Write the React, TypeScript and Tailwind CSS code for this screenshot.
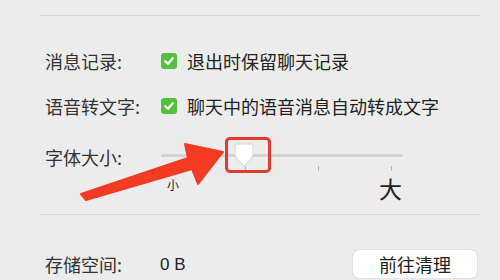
import React from 'react'

const font = { fontFamily: '"Noto Sans CJK SC", "Noto Sans", sans-serif' }

const Check: React.FC = () => (
    <div className="w-[16px] h-[16px] rounded-[3px] bg-[#53c13d] flex items-center justify-center shrink-0">
        <svg width="12" height="12" viewBox="0 0 12 12" fill="none">
            <path d="M2.3 6.2 L4.9 8.8 L9.8 3.2" stroke="white" strokeWidth="2.2" strokeLinecap="round" strokeLinejoin="round" />
        </svg>
    </div>
)

export default function App() {
    return (
        <div className="w-[500px] h-[280px] bg-[#ececec] overflow-hidden relative text-[#222]" style={font}>
            <div className="ml-[40px] mr-[20px] pt-[15px]">
                <div className="h-px bg-[#d9d9d9]" />

                <div className="pl-[5px]">
                    {/* 消息记录 */}
                    <div className="mt-[33px] h-[24px] flex items-center text-[18px] leading-none">
                        <span className="w-[116px] text-[#333]">消息记录:</span>
                        <Check />
                        <span className="ml-[10px]">退出时保留聊天记录</span>
                    </div>

                    {/* 语音转文字 */}
                    <div className="mt-[21px] h-[24px] flex items-center text-[18px] leading-none">
                        <span className="w-[116px] text-[#333]">语音转文字:</span>
                        <Check />
                        <span className="ml-[10px]">聊天中的语音消息自动转成文字</span>
                    </div>

                    {/* 字体大小 */}
                    <div className="mt-[27px] h-[57px] flex items-start">
                        <div className="w-[116px] h-[24px] flex items-center text-[18px] leading-none text-[#333]">字体大小:</div>
                        <div className="relative w-[242px]">
                            <div className="pt-[9px]">
                                <div className="h-[3px] rounded-full bg-[#d3d3d3]" />
                            </div>
                            <div className="mt-[9px] px-[11px] flex justify-between">
                                <div className="w-px h-[5px] bg-[#b5b5b5]" />
                                <div className="w-px h-[5px] bg-[#b5b5b5]" />
                                <div className="w-px h-[5px] bg-[#b5b5b5]" />
                                <div className="w-px h-[5px] bg-[#b5b5b5]" />
                            </div>
                            <div className="mt-[6px] pl-[6px] pr-[1px] flex justify-between items-start">
                                <span className="text-[12px] leading-none mt-[2px]">小</span>
                                <span className="text-[23px] leading-none">大</span>
                            </div>

                            {/* thumb */}
                            <svg className="absolute left-[73px] top-[-2px]" width="20" height="25" viewBox="0 0 20 25">
                                <path d="M2.5 1 H17.5 Q19 1 19 2.5 V13 L10 23.5 L1 13 V2.5 Q1 1 2.5 1 Z" fill="white" stroke="#c9c9c9" strokeWidth="0.8" />
                            </svg>
                            {/* highlight box */}
                            <div className="absolute left-[64px] top-[-8px] w-[46px] h-[36px] border-[3px] border-[#e23b2c] rounded-[5px]" />
                        </div>
                    </div>
                </div>

                <div className="mt-[12px] h-px bg-[#d9d9d9]" />

                {/* 存储空间 */}
                <div className="mt-[35px] pl-[5px] pr-[3px] flex items-center text-[18px] leading-none">
                    <span className="w-[115px] text-[#333]">存储空间:</span>
                    <span style={{ fontFamily: '"Liberation Sans", sans-serif' }} className="text-[17px]">0 B</span>
                    <button className="ml-auto w-[124px] h-[28px] bg-white rounded-[6px] shadow-[0_0_1px_rgba(0,0,0,0.35)] text-[18px] leading-none text-[#222]">
                        前往清理
                    </button>
                </div>
            </div>

            {/* annotation arrow */}
            <svg className="absolute left-0 top-0 pointer-events-none" width="500" height="280" viewBox="0 0 500 280">
                <polygon
                    points="81,194 188,158 185,144 223,152 198,184 192,169 86,200"
                    fill="#f23b22"
                    stroke="#f23b22"
                    strokeWidth="2"
                    strokeLinejoin="round"
                />
            </svg>
        </div>
    )
}
